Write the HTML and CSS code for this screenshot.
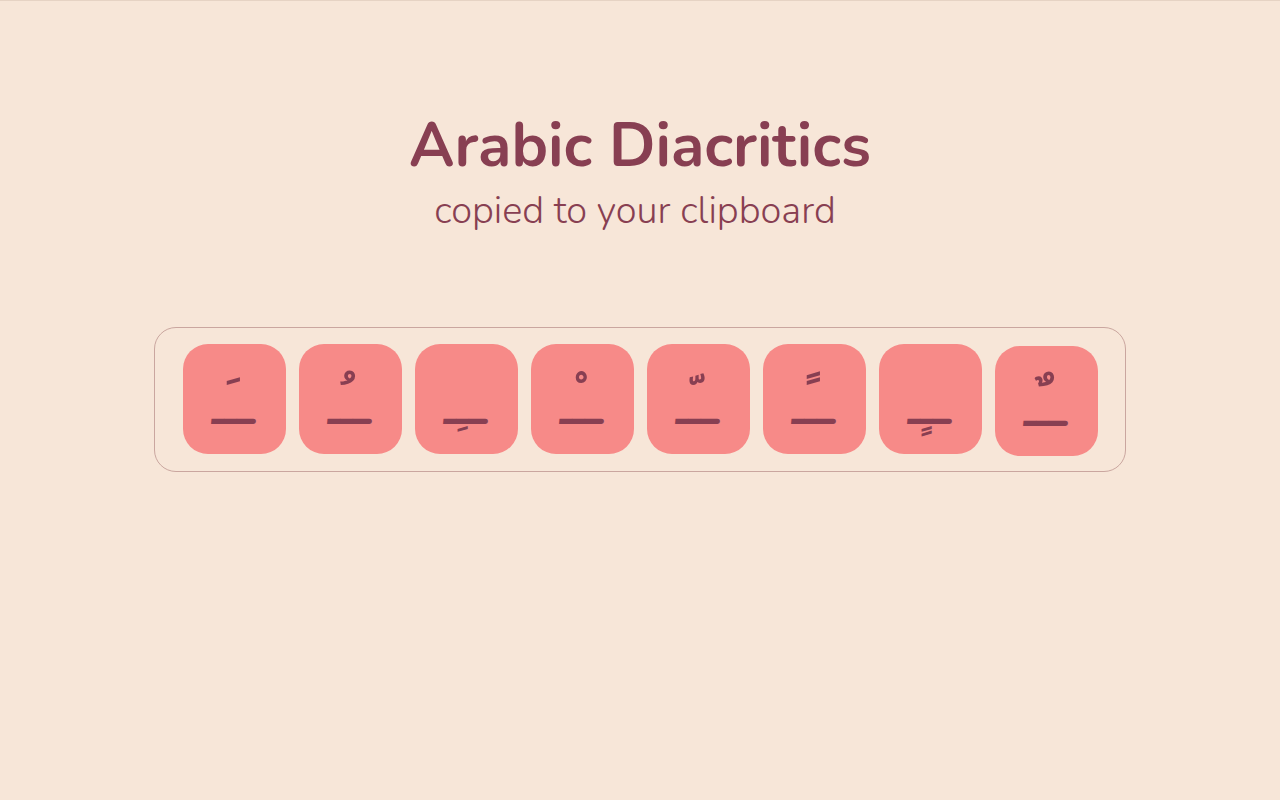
FILE: index.html
```html
<!DOCTYPE html>
<html lang="en">
<head>
<meta charset="utf-8">
<title>Arabic Diacritics</title>
<link rel="stylesheet" href="styles.css">
</head>
<body>
<main class="page">
  <header class="heading">
    <h1 class="title">Arabic Diacritics</h1>
    <p class="subtitle">copied to your clipboard</p>
  </header>
  <section class="keyboard">
    <button class="key" title="fatha"><span class="above"><span class="mark" lang="ar">ـَ</span></span><span class="base" lang="ar">ـــ</span></button>
    <button class="key" title="damma"><span class="above"><span class="mark" lang="ar">ـُ</span></span><span class="base" lang="ar">ـــ</span></button>
    <button class="key" title="kasra"><span class="above"></span><span class="base" lang="ar">ــِـ</span></button>
    <button class="key" title="sukun"><span class="above"><span class="mark" lang="ar">ـْ</span></span><span class="base" lang="ar">ـــ</span></button>
    <button class="key" title="shadda"><span class="above"><span class="mark" lang="ar">ـّ</span></span><span class="base" lang="ar">ـــ</span></button>
    <button class="key" title="fathatan"><span class="above"><span class="mark" lang="ar">ـً</span></span><span class="base" lang="ar">ـــ</span></button>
    <button class="key" title="kasratan"><span class="above"></span><span class="base" lang="ar">ــٍـ</span></button>
    <button class="key key-pressed" title="dammatan"><span class="above"><span class="mark" lang="ar">ـٌ</span></span><span class="base" lang="ar">ـــ</span></button>
  </section>
</main>
</body>
</html>
```
FILE: styles.css
```css
html, body {
  margin: 0;
  padding: 0;
}
body {
  background: #f7e6d8;
  border-top: 1px solid #e6d3c4;
  font-family: "Nunito", "Lato", "Open Sans", sans-serif;
  color: #883f52;
  height: 799px;
}
.page {
  display: flex;
  flex-direction: column;
  align-items: center;
}
.heading {
  display: flex;
  flex-direction: column;
  align-items: center;
  margin-top: 107px;
}
.title {
  margin: 0;
  font-size: 61px;
  font-weight: 700;
  line-height: 76px;
}
.subtitle {
  margin: 2px 10px 0 0;
  font-size: 38px;
  font-weight: 300;
  line-height: 50px;
}
.keyboard {
  margin-top: 91px;
  display: flex;
  gap: 13px;
  padding: 16px 27px 17px 28px;
  border: 1px solid #caa69f;
  border-radius: 22px;
}
.key {
  width: 103px;
  height: 110px;
  border: none;
  border-radius: 25px;
  background: #f78a88;
  padding: 0;
  margin: 0;
  display: flex;
  flex-direction: column;
  align-items: center;
  justify-content: flex-start;
  cursor: pointer;
  font-family: "Noto Sans Arabic", "DejaVu Sans", sans-serif;
  color: #883f52;
}
.key-pressed {
  transform: translateY(2px);
}
.above {
  display: flex;
  justify-content: center;
  align-items: flex-end;
  width: 100%;
  height: 43px;
  overflow: hidden;
  flex: none;
}
.mark {
  display: block;
  font-size: 56px;
  font-weight: 700;
  line-height: 56px;
  margin-bottom: -30px;
}
.base {
  display: block;
  font-size: 44px;
  font-weight: 600;
  line-height: 44px;
  margin-top: 1px;
  flex: none;
}
```
